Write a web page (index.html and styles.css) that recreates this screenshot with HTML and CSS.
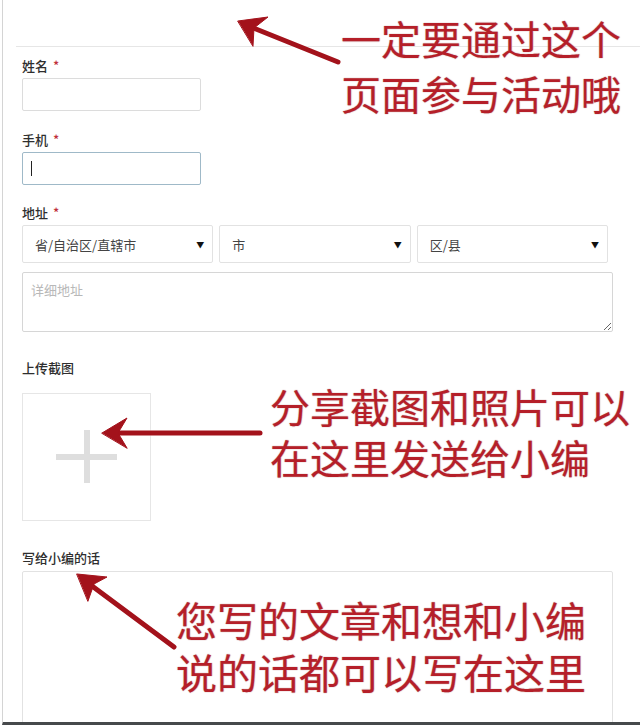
FILE: index.html
```html
<!DOCTYPE html>
<html>
	<head>
		<meta charset="UTF-8">
		<title>活动报名</title>
		<link rel="stylesheet" href="styles.css">
	</head>
	<body>
		<div id="page">
			<div class="head"></div>
			<div class="form">
				<div class="field f_name">
					<div class="label">姓名 <em>*</em></div>
					<div class="input"></div>
				</div>
				<div class="field f_phone">
					<div class="label">手机 <em>*</em></div>
					<div class="input focused"><span class="caret"></span></div>
				</div>
				<div class="field f_addr">
					<div class="label">地址 <em>*</em></div>
					<div class="selects">
						<div class="select"><span>省/自治区/直辖市</span><i>▼</i></div>
						<div class="select"><span>市</span><i>▼</i></div>
						<div class="select"><span>区/县</span><i>▼</i></div>
					</div>
					<textarea class="detail" placeholder="详细地址"></textarea>
				</div>
				<div class="field f_upload">
					<div class="label">上传截图</div>
					<div class="upload"><span class="plus_h"></span><span class="plus_v"></span></div>
				</div>
				<div class="field f_msg">
					<div class="label">写给小编的话</div>
					<textarea class="message"></textarea>
				</div>
			</div>
		</div>

		<!-- 标注 -->
		<svg class="arrows" width="640" height="725" viewBox="0 0 640 725">
			<g stroke="#a3121b" stroke-width="5" stroke-linecap="round" fill="#a3121b">
				<line x1="338" y1="62" x2="246" y2="25"/>
				<path d="M238 21 L268 17 L254 28 L253 46 Z" stroke-width="1"/>
				<line x1="260" y1="433" x2="112" y2="433"/>
				<path d="M102 433 L127 418 L118 433 L127 448 Z" stroke-width="1"/>
				<line x1="174" y1="647" x2="84" y2="580"/>
				<path d="M77 574 L107 577 L94 584 L88 601 Z" stroke-width="1"/>
			</g>
		</svg>
		<div class="note note1"><p>一定要通过这个</p><p>页面参与活动哦</p></div>
		<div class="note note2"><p>分享截图和照片可以</p><p>在这里发送给小编</p></div>
		<div class="note note3"><p>您写的文章和想和小编</p><p>说的话都可以写在这里</p></div>
	</body>
</html>
```

FILE: styles.css
```css
*{
	padding: 0;
	margin: 0;
	box-sizing: border-box;
}
body{
	position: relative;
	width: 640px;
	height: 725px;
	overflow: hidden;
	background: #fff;
	font-family: "Noto Sans CJK SC", "Noto Sans", sans-serif;
	color: #333;
}
#page{
	margin-left: 2px;
	height: 725px;
	border-left: 1px solid #d4d4d4;
	border-bottom: 3px solid #46494b;
	padding-left: 13px;
	overflow: hidden;
}
.head{
	height: 47px;
	border-bottom: 1px solid #e6e6e6;
}
.form{
	padding-left: 6px;
}
.label{
	font-size: 13px;
	font-weight: 500;
	line-height: 20px;
	height: 20px;
	color: #2e2e2e;
}
.label em{
	font-style: normal;
	color: #c0303a;
	margin-left: 2px;
}
.input{
	width: 179px;
	height: 33px;
	border: 1px solid #dcdcdc;
	border-radius: 2px;
	margin-top: 2px;
	padding: 8px 8px;
}
.input.focused{
	border-color: #9fb9c8;
}
.caret{
	display: block;
	width: 1px;
	height: 15px;
	background: #222;
}
.f_name{
	margin-top: 9px;
}
.f_phone{
	margin-top: 19px;
}
.f_addr{
	margin-top: 18px;
}
.selects{
	display: grid;
	grid-template-columns: repeat(3, 1fr);
	gap: 6px;
	width: 586px;
	margin-top: 2px;
}
.select{
	height: 38px;
	border: 1px solid #e2e2e2;
	border-radius: 2px;
	display: flex;
	align-items: center;
	justify-content: space-between;
	padding: 0 8px 0 12px;
	font-size: 13px;
	color: #444;
}
.select i{
	font-style: normal;
	font-size: 8px;
	color: #111;
}
textarea{
	display: block;
	font-family: "Noto Sans CJK SC", "Noto Sans", sans-serif;
	font-size: 13px;
	border: 1px solid #d6d6d6;
	border-radius: 2px;
	padding: 7px 8px;
	outline: none;
	background: #fff;
}
textarea::placeholder{
	color: #b8b8b8;
}
.detail{
	width: 591px;
	height: 60px;
	margin-top: 9px;
	resize: both;
}
.f_upload{
	margin-top: 26px;
}
.upload{
	position: relative;
	width: 129px;
	height: 128px;
	margin-top: 15px;
	border: 1px solid #e6e6e6;
}
.plus_h{
	position: absolute;
	left: 33px;
	top: 60px;
	width: 61px;
	height: 6px;
	background: #dedede;
}
.plus_v{
	position: absolute;
	left: 61px;
	top: 36px;
	width: 6px;
	height: 53px;
	background: #dedede;
}
.f_msg{
	margin-top: 27px;
}
.message{
	width: 591px;
	height: 200px;
	margin-top: 3px;
	border-color: #e2e2e2;
}
.arrows{
	position: absolute;
	top: 0;
	left: 0;
	filter: drop-shadow(0 0 1px #fff);
}
.note{
	position: absolute;
	font-family: "Noto Sans CJK SC", sans-serif;
	font-size: 40px;
	color: #b51f29;
	white-space: nowrap;
	text-shadow: 0 0 2px #fff, 0 0 1px #7a0a12;
}
.note p{
	line-height: 1;
}
.note1{
	left: 341px;
	top: 18px;
}
.note1 p + p{
	margin-top: 15px;
}
.note2{
	left: 270px;
	top: 386px;
}
.note2 p + p{
	margin-top: 11px;
}
.note3{
	left: 176px;
	top: 599px;
	font-size: 41px;
}
.note3 p + p{
	margin-top: 11px;
}
```
